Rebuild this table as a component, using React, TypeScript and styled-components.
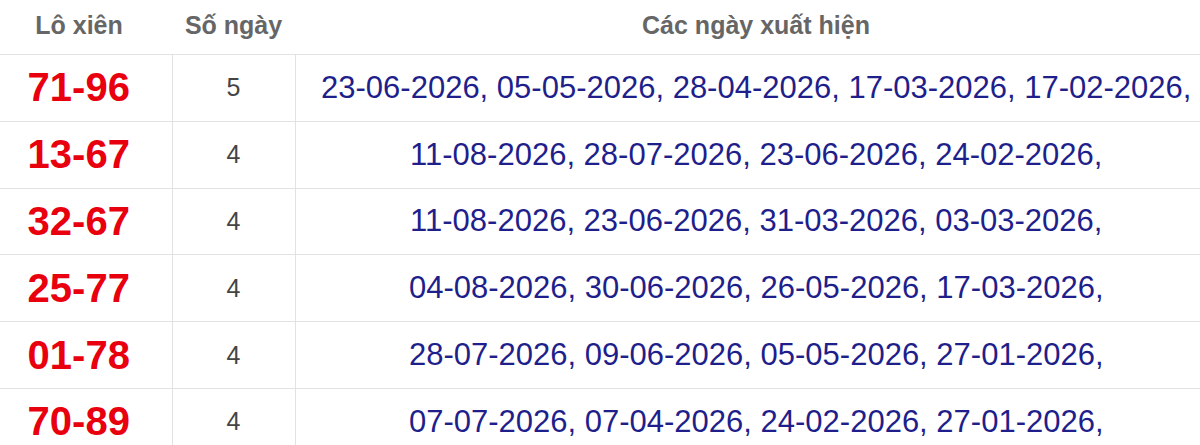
import React from 'react';
import styled, { createGlobalStyle } from 'styled-components';

const GlobalStyle = createGlobalStyle`
  html, body {
    margin: 0;
    padding: 0;
    background: #ffffff;
    overflow: hidden;
  }
  body {
    font-family: "Liberation Sans", Arial, sans-serif;
  }
`;

const Wrapper = styled.div`
  width: 1231px;
  margin-left: -14px;
`;

const Table = styled.table`
  width: 100%;
  border-collapse: collapse;
  table-layout: fixed;
`;

const HeadCell = styled.th<{ $width?: number }>`
  width: ${({ $width }) => ($width ? `${$width}px` : 'auto')};
  height: 50px;
  padding: 0 0 4px;
  font-size: 25px;
  font-weight: bold;
  color: #666666;
  text-align: center;
  vertical-align: middle;
  border-bottom: 1px solid #e2e2e2;
`;

const Row = styled.tr`
  height: 66.8px;
  border-bottom: 1px solid #e2e2e2;
`;

const Cell = styled.td`
  padding: 0;
  text-align: center;
  vertical-align: middle;
  border-right: 1px solid #e2e2e2;

  &:last-child {
    border-right: none;
  }
`;

const Pair = styled(Cell)`
  font-size: 40px;
  font-weight: bold;
  color: #e8000e;
`;

const Count = styled(Cell)`
  font-size: 25px;
  color: #444444;
`;

const Dates = styled(Cell)`
  font-size: 31px;
  color: #1f1f8c;
  white-space: nowrap;
`;

const rows = [
  { pair: '71-96', count: 5, dates: ['23-06-2026', '05-05-2026', '28-04-2026', '17-03-2026', '17-02-2026'] },
  { pair: '13-67', count: 4, dates: ['11-08-2026', '28-07-2026', '23-06-2026', '24-02-2026'] },
  { pair: '32-67', count: 4, dates: ['11-08-2026', '23-06-2026', '31-03-2026', '03-03-2026'] },
  { pair: '25-77', count: 4, dates: ['04-08-2026', '30-06-2026', '26-05-2026', '17-03-2026'] },
  { pair: '01-78', count: 4, dates: ['28-07-2026', '09-06-2026', '05-05-2026', '27-01-2026'] },
  { pair: '70-89', count: 4, dates: ['07-07-2026', '07-04-2026', '24-02-2026', '27-01-2026'] },
];

export default function App() {
  return (
    <>
      <GlobalStyle />
      <Wrapper>
        <Table>
          <thead>
            <tr>
              <HeadCell $width={186}>Lô xiên</HeadCell>
              <HeadCell $width={123}>Số ngày</HeadCell>
              <HeadCell>Các ngày xuất hiện</HeadCell>
            </tr>
          </thead>
          <tbody>
            {rows.map((r) => (
              <Row key={r.pair}>
                <Pair>{r.pair}</Pair>
                <Count>{r.count}</Count>
                <Dates>{r.dates.map((d) => `${d}, `).join('').trimEnd()}</Dates>
              </Row>
            ))}
          </tbody>
        </Table>
      </Wrapper>
    </>
  );
}
